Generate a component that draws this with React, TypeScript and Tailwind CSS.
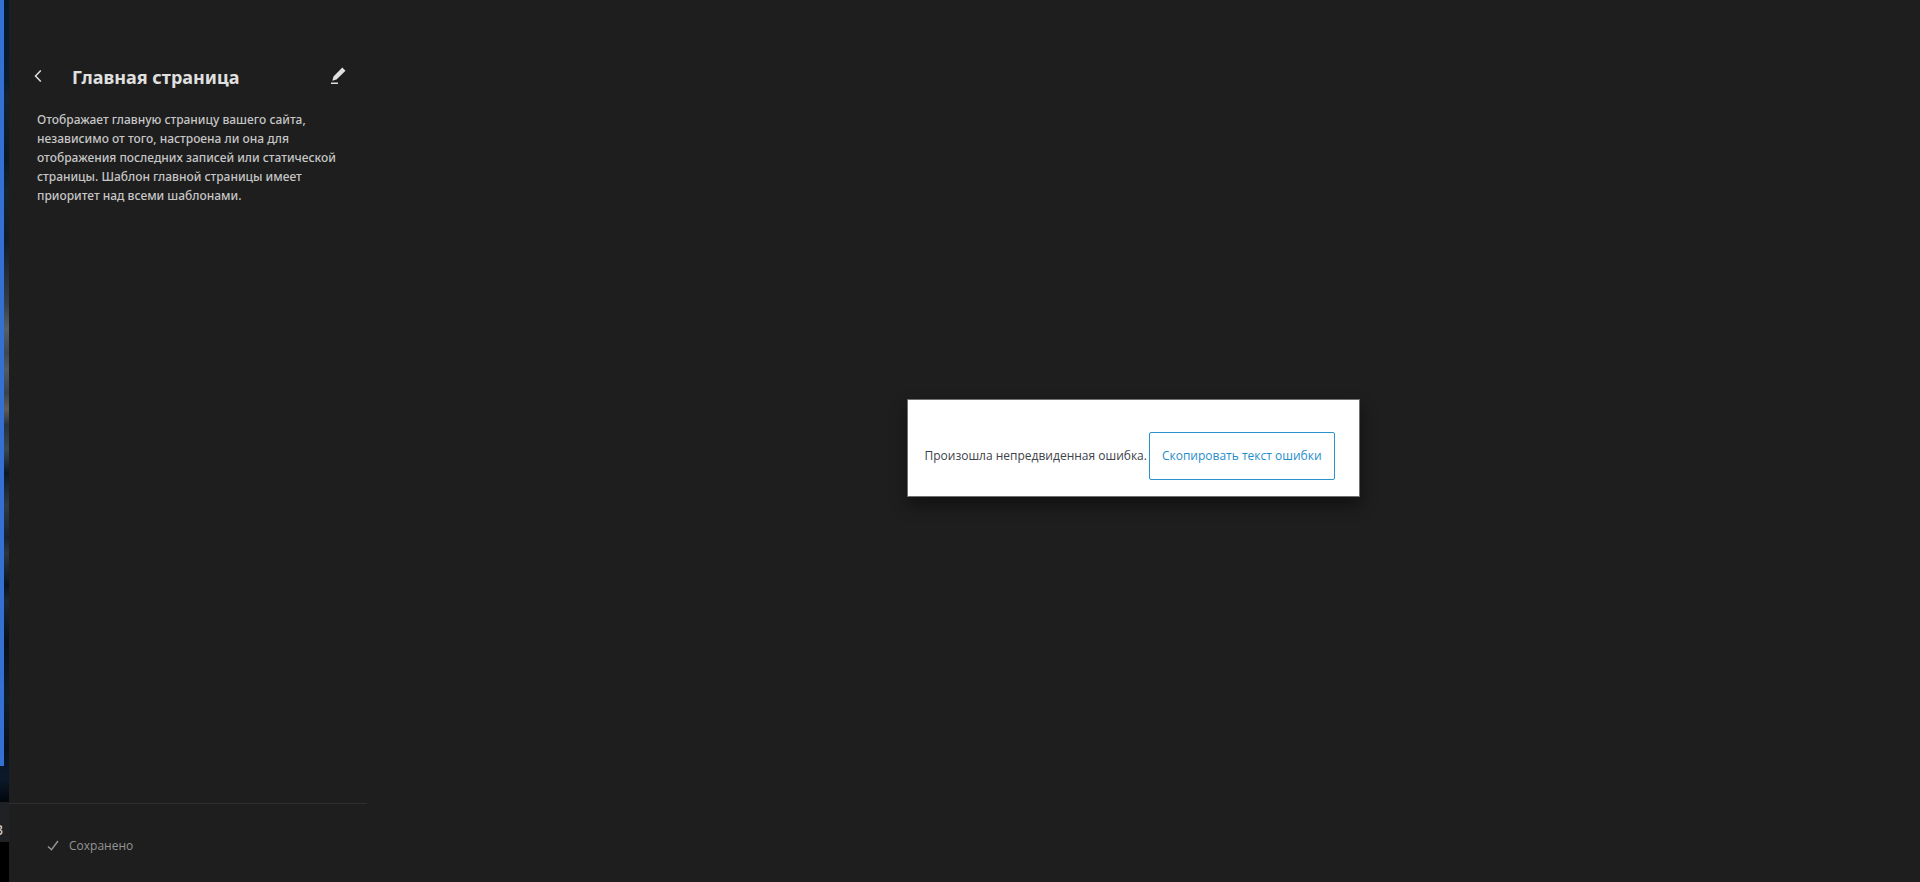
function PhotoStrip() {
  return (
    <div className="flex w-[9px] shrink-0 flex-col overflow-hidden bg-black">
      <div className="min-h-0 flex-1 bg-[linear-gradient(to_bottom,#03182b_0%,#071c30_10%,#13202f_12%,#0a1826_20%,#15222f_24%,#101b29_30%,#36404a_38%,#566069_41%,#3d4853_44%,#505b66_46%,#38434f_49%,#605d5a_51%,#27323e_53%,#3a4754_56%,#0d1724_59%,#2f3a47_63%,#17212e_67%,#2c3540_69%,#0a121c_73%,#1b2733_75%,#080f18_80%,#101d2a_87%,#07111b_93%,#0b1a2b_97%,#02060c_100%)]">
        <div className="h-[calc(100%-36px)] w-1 bg-[#3471d2]" />
      </div>
      <div className="flex h-10 items-center justify-end bg-[#202124] pt-4 pr-[6px] text-sm text-[#d5d5d5]">
        В
      </div>
      <div className="h-10 bg-black" />
    </div>
  );
}

function Sidebar() {
  return (
    <aside className="flex w-[358px] shrink-0 flex-col">
      <header className="flex items-start pt-[60px] pr-[13px] pl-[17px]">
        <button type="button" aria-label="Назад" className="flex size-8 items-center pl-[7px] text-[#e0e0e0]">
          <svg viewBox="0 0 10 14" className="h-[14px] w-[10px]" fill="none" stroke="currentColor" strokeWidth="1.5">
            <path d="M7.8 1.5 2.5 7l5.3 5.5" />
          </svg>
        </button>
        <h1 className="ml-[14px] flex-1 text-[18px] leading-[34px] font-bold text-[#e0e0e0]">Главная страница</h1>
        <button type="button" aria-label="Редактировать" className="flex size-8 items-center justify-center text-[#e0e0e0]">
          <svg viewBox="0 0 24 24" className="size-6" fill="currentColor">
            <path d="m19.5 6.8-3.2-3.2-8.8 8.9-1.2 4.2 4.2-1.2 9-8.7ZM12 18.5H5V20h7v-1.5Z" />
          </svg>
        </button>
      </header>
      <p className="mt-4 pr-[18px] pl-7 text-[12px] leading-[19px] font-medium text-[#c6c6c6]">
        Отображает главную страницу вашего сайта, независимо от того, настроена ли она для отображения последних
        записей или статической страницы. Шаблон главной страницы имеет приоритет над всеми шаблонами.
      </p>
      <footer className="mt-auto flex h-[79px] items-center gap-[9px] border-t border-[#2f2f2f] pt-[5px] pl-[37px] text-[#949494]">
        <svg viewBox="0 0 14 14" className="size-[14px]" fill="none" stroke="currentColor" strokeWidth="1.5">
          <path d="m2 7.5 3.5 3.2 6.5-8.7" />
        </svg>
        <span className="font-['Open_Sans','Noto_Sans',sans-serif] text-[12px]">Сохранено</span>
      </footer>
    </aside>
  );
}

function ErrorNotice() {
  return (
    <div
      role="alert"
      className="flex items-center border border-[#707070] bg-white pt-8 pr-6 pb-4 pl-4 font-['Open_Sans','Noto_Sans',sans-serif] text-[12px] shadow-[0_8px_16px_rgba(0,0,0,0.45)]"
    >
      <p className="pr-[2px] text-[#3c434a]">Произошла непредвиденная ошибка.</p>
      <button type="button" className="h-12 rounded-[2px] border border-[#2a93cc] px-3 text-[#1f8dca]">
        Скопировать текст ошибки
      </button>
    </div>
  );
}

export default function App() {
  return (
    <div className="flex h-screen bg-[#1e1e1e] font-['Noto_Sans','Open_Sans',sans-serif]">
      <PhotoStrip />
      <Sidebar />
      <main className="flex flex-1 items-center justify-center pt-[13px] pr-5">
        <ErrorNotice />
      </main>
    </div>
  );
}
